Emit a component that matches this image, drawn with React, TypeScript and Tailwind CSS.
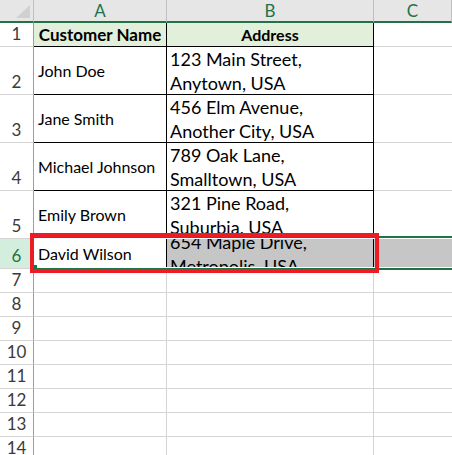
const rows = [
  { n: 2, name: 'John Doe', l1: '123 Main Street,', l2: 'Anytown, USA' },
  { n: 3, name: 'Jane Smith', l1: '456 Elm Avenue,', l2: 'Another City, USA' },
  { n: 4, name: 'Michael Johnson', l1: '789 Oak Lane,', l2: 'Smalltown, USA' },
  { n: 5, name: 'Emily Brown', l1: '321 Pine Road,', l2: 'Suburbia, USA' },
]

const emptyRows = [7, 8, 9, 10, 11, 12, 13, 14]

function RowNum({ n, h }: { n: number; h: string }) {
  return (
    <div className={`${h} flex items-end justify-center border-r border-b border-r-[#9e9e9e] border-b-[#d4d4d4] text-[17px] leading-[24px] text-[#3b3b3b]`}>
      {n}
    </div>
  )
}

export default function App() {
  return (
    <div className="relative h-[455px] w-[452px] overflow-hidden bg-white font-['Lato','Liberation_Sans',sans-serif] text-[16px] text-black">
      <div className="grid grid-cols-[34px_133px_207px_1fr]">
        {/* column headers */}
        <div className="relative h-[23px] border-r border-b-2 border-r-[#bfbfbf] border-b-[#217346] bg-[#e6e6e6]">
          <svg className="absolute left-0 top-0" width="33" height="21" viewBox="0 0 33 21">
            <polygon points="30,5 30,18 16,18" fill="#d0d0d0" />
          </svg>
        </div>
        {['A', 'B', 'C'].map((c) => (
          <div
            key={c}
            className="flex h-[23px] items-center justify-center border-r border-b-2 border-r-[#bfbfbf] border-b-[#217346] bg-[#e6e6e6] text-[17px] text-[#217346]"
          >
            {c}
          </div>
        ))}

        {/* row 1 */}
        <RowNum n={1} h="h-[24px]" />
        <div className="flex h-[24px] items-center justify-center border-r border-b border-black bg-[#e2efda] text-[17px] font-bold">
          Customer Name
        </div>
        <div className="flex h-[24px] items-center justify-center border-r border-b border-black bg-[#e2efda] font-bold">
          Address
        </div>
        <div className="h-[24px] border-b border-[#d4d4d4]" />

        {rows.map((r) => (
          <div key={r.n} className="contents">
            <RowNum n={r.n} h="h-[48px]" />
            <div className="flex h-[48px] items-center border-r border-b border-black pl-[4px]">{r.name}</div>
            <div className="flex h-[48px] flex-col justify-center border-r border-b border-black pl-[3px] text-[18px] leading-[24px]">
              <span>{r.l1}</span>
              <span>{r.l2}</span>
            </div>
            <div className="h-[48px] border-b border-[#d4d4d4]" />
          </div>
        ))}

        {/* row 6 (selected) */}
        <div className="flex h-[30px] items-end justify-center border-r border-b border-r-[#9e9e9e] border-b-[#d4d4d4] bg-[#d3eedc] text-[17px] leading-[24px] text-[#217346]">
          6
        </div>
        <div className="flex h-[30px] items-center border-r border-b border-black pl-[4px]">David Wilson</div>
        <div className="flex h-[30px] flex-col justify-center overflow-hidden border-r border-b border-black bg-[#c6c6c6] pl-[3px] text-[18px] leading-[24px]">
          <span className="shrink-0">654 Maple Drive,</span>
          <span className="shrink-0">Metropolis, USA</span>
        </div>
        <div className="h-[30px] border-b border-[#d4d4d4] bg-[#c6c6c6]" />

        {emptyRows.map((n) => (
          <div key={n} className="contents">
            <RowNum n={n} h="h-[24px]" />
            <div className="h-[24px] border-r border-b border-[#d4d4d4]" />
            <div className="h-[24px] border-r border-b border-[#d4d4d4]" />
            <div className="h-[24px] border-b border-[#d4d4d4]" />
          </div>
        ))}
      </div>

      {/* selection border for row 6 */}
      <div className="absolute left-[34px] right-0 top-[236px] h-[34px] border-y-2 border-[#217346]">
        <div className="h-full border-y border-white" />
      </div>
      <div className="absolute left-[34px] top-[265px] h-[3px] w-[3px] bg-[#217346]" />

      {/* red annotation box */}
      <div className="absolute left-[30px] top-[233px] h-[40px] w-[349px] border-4 border-[#ed1c24]" />
    </div>
  )
}
